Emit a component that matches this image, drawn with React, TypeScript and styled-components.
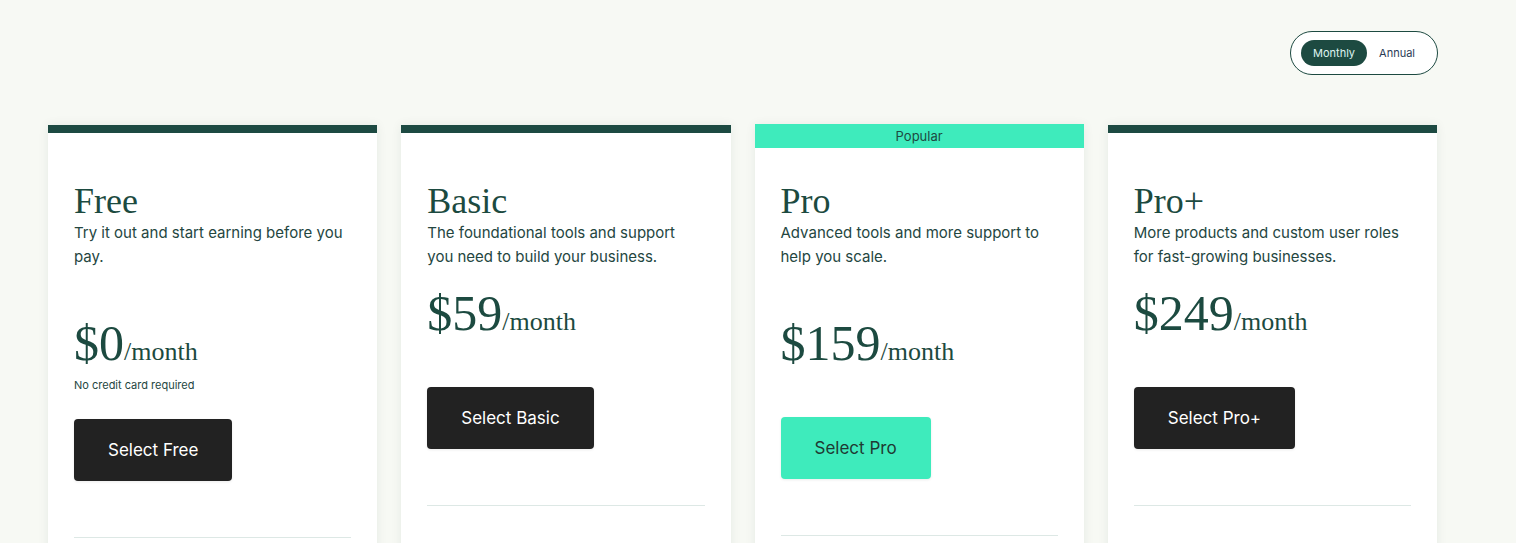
import React from 'react';
import styled, {createGlobalStyle} from 'styled-components';

const GlobalStyle = createGlobalStyle`
  body {
    margin: 0;
    background: #f7f9f4;
    font-family: Inter, "Liberation Sans", Arial, sans-serif;
    overflow: hidden;
  }
`

type PlanType = {
    name: string
    description: string
    price: string
    note?: string
    button: string
    popular?: boolean
    lowered?: boolean
}

const plans: PlanType[] = [
    {name: 'Free', description: 'Try it out and start earning before you pay.', price: '$0', note: 'No credit card required', button: 'Select Free', lowered: true},
    {name: 'Basic', description: 'The foundational tools and support you need to build your business.', price: '$59', button: 'Select Basic'},
    {name: 'Pro', description: 'Advanced tools and more support to help you scale.', price: '$159', button: 'Select Pro', popular: true, lowered: true},
    {name: 'Pro+', description: 'More products and custom user roles for fast-growing businesses.', price: '$249', button: 'Select Pro+'},
]

const Plan = (props: PlanType) => {
    return (
        <Card>
            <Ribbon $popular={props.popular}>{props.popular ? 'Popular' : null}</Ribbon>
            <Title>{props.name}</Title>
            <Description $lowered={props.lowered}>{props.description}</Description>
            <Price>{props.price}<Period>/month</Period></Price>
            <NoteSlot $filled={!!props.note}>{props.note && <Note>{props.note}</Note>}</NoteSlot>
            <SelectButton $popular={props.popular}>{props.button}</SelectButton>
            <Divider/>
        </Card>
    );
};

export default function App() {
    return (
        <Page>
            <GlobalStyle/>
            <Header>
                <Toggle>
                    <Option $active>Monthly</Option>
                    <Option>Annual</Option>
                </Toggle>
            </Header>
            <Grid>
                {plans.map(p => <Plan key={p.name} {...p}/>)}
            </Grid>
        </Page>
    );
}

const Page = styled.div`
  width: 1390px;
  padding: 31px 0 0 48px;
`
const Header = styled.div`
  display: flex;
  justify-content: flex-end;
  margin-bottom: 50px;
`
const Toggle = styled.div`
  display: flex;
  align-items: center;
  height: 44px;
  box-sizing: border-box;
  padding: 0 10px;
  border: 1px solid #1d4a41;
  border-radius: 22px;
  background: #fff;
`
const Option = styled.div<{ $active?: boolean }>`
  height: 26px;
  line-height: 26px;
  padding: 0 12px;
  border-radius: 13px;
  font-size: 11px;
  color: ${p => p.$active ? '#dff4f1' : '#2a3b55'};
  background: ${p => p.$active ? '#1d4a41' : 'transparent'};
`
const Grid = styled.div`
  display: grid;
  grid-template-columns: repeat(4, 1fr);
  gap: 24px;
  width: 1389px;
`
const Card = styled.div`
  position: relative;
  min-height: 520px;
  padding: 56px 26px 0;
  background: #fff;
  box-shadow: 0 0 10px rgba(30, 70, 50, 0.08);
`
const Ribbon = styled.div<{ $popular?: boolean }>`
  position: absolute;
  left: 0;
  right: 0;
  top: ${p => p.$popular ? '-1px' : '0'};
  height: ${p => p.$popular ? '24px' : '8px'};
  line-height: 24px;
  text-align: center;
  font-size: 13px;
  color: #1d4a41;
  background: ${p => p.$popular ? '#3eebbc' : '#1d4a42'};
`
const Title = styled.h2`
  margin: 0;
  font-family: "Liberation Serif", "Times New Roman", serif;
  font-weight: 400;
  font-size: 36px;
  line-height: 40px;
  color: #1c4a40;
`
const Description = styled.p<{ $lowered?: boolean }>`
  margin: 0 0 ${p => p.$lowered ? '47px' : '17px'};
  font-size: 15px;
  line-height: 24px;
  color: #24463f;
`
const Price = styled.div`
  font-family: "Liberation Serif", "Times New Roman", serif;
  font-size: 50px;
  line-height: 54px;
  color: #1c4a40;
`
const Period = styled.span`
  font-size: 26px;
  line-height: 1;
`
const NoteSlot = styled.div<{ $filled?: boolean }>`
  box-sizing: border-box;
  height: ${p => p.$filled ? '25px' : '23px'};
  padding-top: 7px;
`
const Note = styled.p`
  margin: 0;
  font-size: 11px;
  line-height: 16px;
  color: #24463f;
`
const SelectButton = styled.button<{ $popular?: boolean }>`
  display: block;
  margin-top: 24px;
  height: 62px;
  padding: 0 34px;
  border: none;
  border-radius: 4px;
  font-family: Inter, "Liberation Sans", Arial, sans-serif;
  font-size: 17px;
  color: ${p => p.$popular ? '#1f3a33' : '#fff'};
  background: ${p => p.$popular ? '#3eebbc' : '#222222'};
  box-shadow: 0 1px 3px rgba(0, 0, 0, 0.08);
`
const Divider = styled.hr`
  margin: 56px 0 0;
  border: none;
  border-top: 1px solid #dde8e5;
`
